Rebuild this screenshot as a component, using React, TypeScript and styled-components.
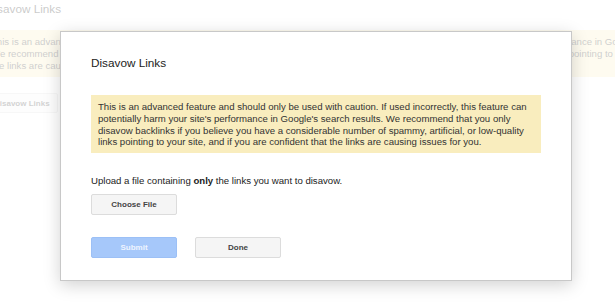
import styled, { createGlobalStyle } from "styled-components";

const GlobalStyle = createGlobalStyle`
  html, body {
    margin: 0;
    padding: 0;
    background: #fff;
  }
  body {
    font-family: "Liberation Sans", Arial, Helvetica, sans-serif;
    color: #222;
  }
`;

const Screen = styled.div`
  position: relative;
  width: 615px;
  height: 305px;
  overflow: hidden;
  background: #fff;
`;

const BgPage = styled.div`
  display: flex;
  flex-direction: column;
  align-items: flex-start;
  margin-left: -14px;
  padding-top: 2px;
`;

const PageTitle = styled.h1`
  margin: 0;
  font-size: 11.75px;
  line-height: 14px;
  font-weight: normal;
  color: #222;
`;

const Notice = styled.div<{ $wide?: boolean }>`
  box-sizing: border-box;
  background: #f9edbe;
  color: #333;
  font-size: 9.6px;
  line-height: 11.75px;
  padding: ${(p) => (p.$wide ? "6px 5px" : "6px 7px 5px")};
  width: ${(p) => (p.$wide ? "700px" : "100%")};
  white-space: ${(p) => (p.$wide ? "nowrap" : "normal")};
`;

const BgNotice = styled(Notice)`
  margin-top: 14px;
`;

const Button = styled.button<{ $primary?: boolean }>`
  box-sizing: border-box;
  width: 86px;
  height: 21px;
  padding: 0 7px;
  border-radius: 2px;
  font-family: inherit;
  font-size: 8px;
  font-weight: bold;
  cursor: default;
  background: ${(p) => (p.$primary ? "#a6c8fa" : "#f5f5f5")};
  border: 1px solid ${(p) => (p.$primary ? "#9cc0f6" : "#dcdcdc")};
  color: ${(p) => (p.$primary ? "#eef4ff" : "#444")};
`;

const BgButton = styled(Button)`
  width: auto;
  height: 20px;
  margin-top: 16px;
`;

const Veil = styled.div`
  position: absolute;
  inset: 0;
  background: rgba(255, 255, 255, 0.76);
`;

const Dialog = styled.div`
  position: absolute;
  left: 60px;
  top: 31px;
  box-sizing: border-box;
  width: 512px;
  padding: 24px 30px 22px;
  background: #fff;
  border: 1px solid #c8c8c8;
  box-shadow: 0 4px 16px rgba(0, 0, 0, 0.18);
`;

const DialogTitle = styled.h2`
  margin: 0 0 25px;
  font-size: 11.75px;
  line-height: 14px;
  font-weight: normal;
  color: #222;
`;

const Instructions = styled.p`
  margin: 22px 0 6.5px;
  font-size: 9.6px;
  line-height: 11.75px;
  color: #222;
`;

const Actions = styled.div`
  display: flex;
  gap: 18px;
  margin-top: 22px;
`;

const warning =
  "This is an advanced feature and should only be used with caution. If used incorrectly, this feature can potentially harm your site's performance in Google's search results. We recommend that you only disavow backlinks if you believe you have a considerable number of spammy, artificial, or low-quality links pointing to your site, and if you are confident that the links are causing issues for you.";

export default function App() {
  return (
    <>
      <GlobalStyle />
      <Screen>
        <BgPage>
          <PageTitle>Disavow Links</PageTitle>
          <BgNotice $wide>
            This is an advanced feature and should only be used with caution. If used incorrectly, this feature can potentially harm your site's performance in Google's search results.
            <br />
            We recommend that you only disavow backlinks if you believe you have a considerable number of spammy, artificial, or low-quality links pointing to your site, and if you are confident that
            <br />
            the links are causing issues for you.
          </BgNotice>
          <BgButton>Disavow Links</BgButton>
        </BgPage>
        <Veil />
        <Dialog>
          <DialogTitle>Disavow Links</DialogTitle>
          <Notice>{warning}</Notice>
          <Instructions>
            Upload a file containing <b>only</b> the links you want to disavow.
          </Instructions>
          <Button>Choose File</Button>
          <Actions>
            <Button $primary disabled>
              Submit
            </Button>
            <Button>Done</Button>
          </Actions>
        </Dialog>
      </Screen>
    </>
  );
}
